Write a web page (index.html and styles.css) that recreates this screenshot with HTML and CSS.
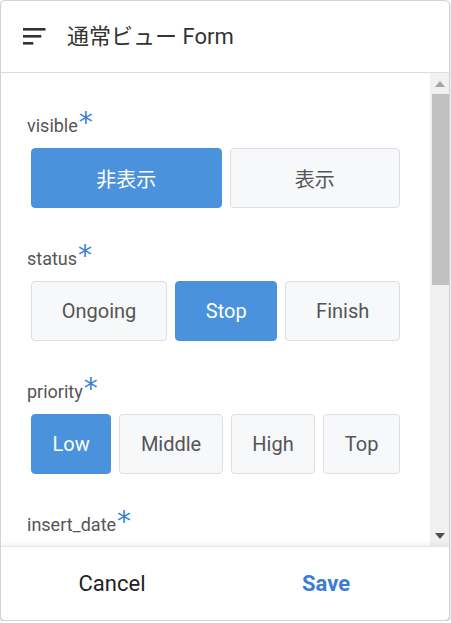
FILE: index.html
```html
<!DOCTYPE html>
<html lang="ja">
<head>
<meta charset="utf-8">
<title>通常ビュー Form</title>
<link rel="stylesheet" href="styles.css">
</head>
<body>
<div class="card">
  <header class="header">
    <svg class="menu-icon" width="24" height="18" viewBox="0 0 24 18" aria-hidden="true">
      <rect x="0" y="0" width="22.5" height="2.6" fill="#333"/>
      <rect x="0" y="7" width="18.3" height="2.6" fill="#333"/>
      <rect x="0" y="14" width="10.3" height="2.6" fill="#333"/>
    </svg>
    <h1 class="title">通常ビュー Form</h1>
  </header>
  <div class="body">
    <main class="content">
      <div class="field">
        <div class="label">visible<span class="req">*</span></div>
        <div class="group">
          <button class="opt on">非表示</button>
          <button class="opt">表示</button>
        </div>
      </div>
      <div class="field">
        <div class="label">status<span class="req">*</span></div>
        <div class="group">
          <button class="opt">Ongoing</button>
          <button class="opt on">Stop</button>
          <button class="opt">Finish</button>
        </div>
      </div>
      <div class="field">
        <div class="label">priority<span class="req">*</span></div>
        <div class="group">
          <button class="opt on">Low</button>
          <button class="opt">Middle</button>
          <button class="opt">High</button>
          <button class="opt">Top</button>
        </div>
      </div>
      <div class="field">
        <div class="label">insert_date<span class="req">*</span></div>
      </div>
    </main>
    <div class="scrollbar" aria-hidden="true">
      <div class="sb-btn"><svg width="10" height="6" viewBox="0 0 10 6"><polygon points="0,6 10,6 5,0" fill="#a3a3a3"/></svg></div>
      <div class="sb-track"><div class="sb-thumb"></div></div>
      <div class="sb-btn"><svg width="10" height="6" viewBox="0 0 10 6"><polygon points="0,0 10,0 5,6" fill="#505050"/></svg></div>
    </div>
  </div>
  <footer class="footer">
    <button class="act cancel">Cancel</button>
    <button class="act save">Save</button>
  </footer>
</div>
</body>
</html>
```

FILE: styles.css
```css
html, body {
  margin: 0;
  padding: 0;
  background: #fff;
}
body {
  font-family: Roboto, "Noto Sans CJK JP", sans-serif;
}
.card {
  box-sizing: border-box;
  width: 450px;
  height: 621px;
  border: 1px solid #d2d2d2;
  border-radius: 5px;
  box-shadow: 0 1px 2px rgba(0, 0, 0, 0.25);
  display: flex;
  flex-direction: column;
  overflow: hidden;
  background: #fff;
}
.header {
  flex: 0 0 auto;
  height: 71px;
  border-bottom: 1px solid #dcdcdc;
  display: flex;
  align-items: center;
  padding-left: 22px;
}
.menu-icon {
  display: block;
  margin-top: 1px;
}
.title {
  margin: 0 0 0 20px;
  font-family: Roboto, "Noto Sans CJK JP", sans-serif;
  font-weight: 400;
  font-size: 22px;
  color: #333;
  line-height: 1;
}
.body {
  flex: 1 1 auto;
  display: flex;
  min-height: 0;
}
.content {
  flex: 1 1 auto;
  min-width: 0;
  overflow: hidden;
  padding: 40px 26px 0 26px;
}
.field {
  margin-bottom: 38px;
}
.label {
  font-size: 18px;
  line-height: 26px;
  color: #555;
  height: 26px;
}
.req {
  font-family: "DejaVu Sans", sans-serif;
  font-size: 28px;
  line-height: 0;
  color: #3a7fd5;
  position: relative;
  top: 0;
  margin-left: 1px;
}
.group {
  display: flex;
  gap: 8px;
  padding: 0 4px;
  margin-top: 9px;
}
.opt {
  flex: 1 1 auto;
  height: 60px;
  padding: 0 4px;
  border: 1px solid #dcdee2;
  border-radius: 4px;
  background: #f7f8fa;
  font-family: Roboto, "Noto Sans CJK JP", sans-serif;
  font-size: 20px;
  color: #555;
}
.opt.on {
  background: #4a92dc;
  border-color: #4a92dc;
  color: #fff;
}
.scrollbar {
  flex: 0 0 19px;
  display: flex;
  flex-direction: column;
  background: #f1f1f1;
}
.sb-btn {
  flex: 0 0 21px;
  display: flex;
  align-items: center;
  justify-content: center;
  padding-left: 1px;
}
.sb-btn svg {
  display: block;
}
.sb-track {
  flex: 1 1 auto;
}
.sb-thumb {
  height: 191px;
  margin-left: 2px;
  background: #c1c1c1;
}
.footer {
  flex: 0 0 auto;
  height: 73px;
  border-top: 1px solid #e4e4e4;
  box-shadow: 0 -2px 5px rgba(0, 0, 0, 0.06);
  display: flex;
  position: relative;
  padding: 0 16px 0 4px;
}
.act {
  flex: 1 1 0;
  border: 0;
  background: transparent;
  font-family: Roboto, sans-serif;
  font-size: 22px;
  padding: 0;
}
.cancel {
  color: #222;
}
.save {
  color: #3b7dd3;
  font-weight: 700;
}
```
